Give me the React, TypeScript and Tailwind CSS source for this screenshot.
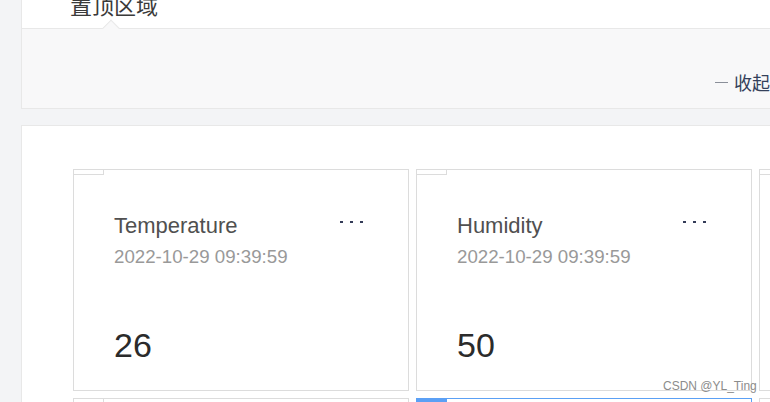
const SANS = "font-['Liberation_Sans',Arial,sans-serif]"
const CJK = "font-['Noto_Sans_CJK_SC','Noto_Sans',sans-serif]"

interface Sensor {
  title: string
  time: string
  value: string
}

const sensors: Sensor[] = [
  { title: 'Temperature', time: '2022-10-29 09:39:59', value: '26' },
  { title: 'Humidity', time: '2022-10-29 09:39:59', value: '50' },
  { title: 'Light', time: '2022-10-29 09:39:59', value: '320' },
  { title: 'PM2.5', time: '2022-10-29 09:39:59', value: '18' },
  { title: 'CO2', time: '2022-10-29 09:39:59', value: '410' },
  { title: 'Noise', time: '2022-10-29 09:39:59', value: '35' },
]

function SensorCard({ sensor, active }: { sensor: Sensor; active?: boolean }) {
  return (
    <div className={`relative w-[336px] h-[222px] shrink-0 bg-white border ${active ? 'border-[#5ba0f5]' : 'border-[#dcdcdc]'}`}>
      <div className={`absolute left-0 top-0 w-[30px] ${active ? 'h-[5px] bg-[#5ba0f5]' : 'h-[5px] border-r border-b border-[#dcdcdc]'}`} />
      <div className="flex flex-col pl-[40px] pr-[45px] pt-[44px]">
        <div className="flex justify-between items-start">
          <div className={`${SANS} text-[22px] leading-[24px] text-[#505050]`}>{sensor.title}</div>
          <div className="flex gap-[7px] mt-[7px]">
            <div className="w-[3px] h-[2px] bg-[#343c58]" />
            <div className="w-[3px] h-[2px] bg-[#343c58]" />
            <div className="w-[3px] h-[2px] bg-[#343c58]" />
          </div>
        </div>
        <div className={`${SANS} mt-[8px] text-[18.7px] leading-[22px] text-[#999999]`}>{sensor.time}</div>
        <div className={`${SANS} mt-[57px] text-[34px] leading-[40px] text-[#2b2b2b]`}>{sensor.value}</div>
      </div>
    </div>
  )
}

export default function App() {
  return (
    <div className="relative w-[770px] h-[402px] overflow-hidden bg-[#f3f4f6]">
      {/* top pinned area */}
      <div className="ml-[21px] w-[790px] border-l border-b border-[#e8e8e8]">
        <div className="h-[29px] flex items-end pl-[48px] pb-[13px] bg-white border-b border-[#e8e8e8]">
          <span className={`${CJK} text-[22px] leading-[21px] text-[#3a3a3a]`}>置顶区域</span>
        </div>
        <div className="relative h-[79px] bg-[#f8f8f9] flex justify-end items-end pb-[15px] pr-[41px]">
          <div className="absolute left-[83px] top-[-7px] w-[12px] h-[12px] rotate-45 bg-[#f8f8f9] border-l border-t border-[#e8e8e8]" />
          <div className="flex items-center gap-[6px]">
            <div className="w-[13px] h-px bg-[#8a8f99]" />
            <span className={`${CJK} text-[18px] leading-[22px] text-[#34405a]`}>收起</span>
          </div>
        </div>
      </div>

      {/* sensor cards */}
      <div className="mt-[16px] ml-[21px] w-[790px] h-[400px] bg-white border-l border-t border-[#e8e8e8] pl-[51px] pt-[43px]">
        <div className="grid grid-cols-[336px_336px_336px] gap-[7px]">
          {sensors.map((s, i) => (
            <SensorCard key={s.title} sensor={s} active={i === 4} />
          ))}
        </div>
      </div>

      <div className={`absolute left-[663px] top-[379px] ${SANS} text-[12px] leading-[14px] text-[#8c8c8c]`}>
        CSDN @YL_Ting
      </div>
    </div>
  )
}
